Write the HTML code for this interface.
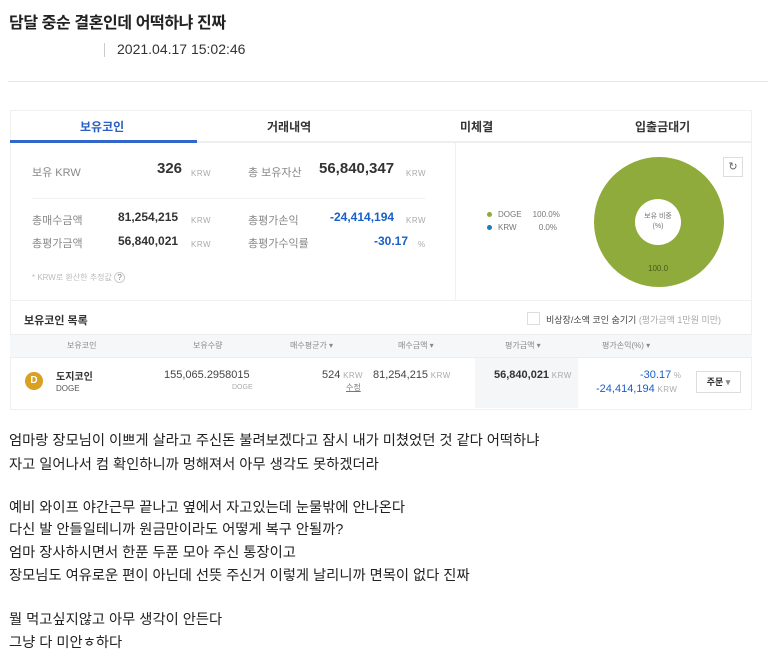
<!DOCTYPE html><html><head><meta charset="utf-8"><style>
*{margin:0;padding:0;box-sizing:border-box}
body{width:768px;height:661px;background:#fff;font-family:"Liberation Sans","Noto Sans CJK KR",sans-serif;color:#222;position:relative;overflow:hidden}
.a{position:absolute;white-space:nowrap}
.g{color:#888}.k{font-size:8px;color:#aaa;letter-spacing:.5px}
.b{color:#1a5fc9}
.n{font-weight:bold;color:#333}
.t{font-size:14.3px;color:#222;left:9px}
</style></head><body>
<div class="a" style="left:9px;top:9px;font-size:16px;letter-spacing:-0.4px;font-weight:bold;color:#222">담달 중순 결혼인데 어떡하냐 진짜</div>
<div class="a" style="left:104px;top:43px;width:1px;height:14px;background:#ccc"></div>
<div class="a" style="left:117px;top:41px;font-size:14px;color:#333">2021.04.17 15:02:46</div>
<div class="a" style="left:8px;top:81px;width:760px;height:1px;background:#e8e8e8"></div>

<div class="a" style="left:10px;top:110px;width:742px;height:300px;border:1px solid #f0f0f0;background:#fff"></div>
<div class="a" style="left:10px;top:141px;width:742px;height:2px;background:#eceef2"></div>
<div class="a" style="left:10px;top:140px;width:187px;height:3px;background:#3266c8"></div>
<div class="a" style="left:80px;top:118px;font-size:12px;font-weight:bold;color:#2b5fc4">보유코인</div>
<div class="a" style="left:267px;top:118px;font-size:12px;font-weight:bold;color:#333">거래내역</div>
<div class="a" style="left:460px;top:118px;font-size:12px;font-weight:bold;color:#333">미체결</div>
<div class="a" style="left:635px;top:118px;font-size:12px;font-weight:bold;color:#333">입출금대기</div>
<div class="a" style="left:455px;top:143px;width:1px;height:157px;background:#f0f0f0"></div>

<div class="a g" style="left:32px;top:164px;font-size:11px">보유 KRW</div>
<div class="a n" style="left:157px;top:160px;font-size:15px">326</div><div class="a k" style="left:191px;top:169px">KRW</div>
<div class="a g" style="left:248px;top:164px;font-size:11px">총 보유자산</div>
<div class="a n" style="left:319px;top:160px;font-size:15px">56,840,347</div><div class="a k" style="left:406px;top:169px">KRW</div>
<div class="a" style="left:32px;top:198px;width:393px;height:1px;background:#f0f0f0"></div>
<div class="a g" style="left:32px;top:212px;font-size:11px">총매수금액</div>
<div class="a n" style="left:118px;top:210px;font-size:12px">81,254,215</div><div class="a k" style="left:191px;top:216px">KRW</div>
<div class="a g" style="left:248px;top:212px;font-size:11px">총평가손익</div>
<div class="a n b" style="left:330px;top:210px;font-size:12px;color:#1a5fc9">-24,414,194</div><div class="a k" style="left:406px;top:216px">KRW</div>
<div class="a g" style="left:32px;top:235px;font-size:11px">총평가금액</div>
<div class="a n" style="left:118px;top:234px;font-size:12px">56,840,021</div><div class="a k" style="left:191px;top:240px">KRW</div>
<div class="a g" style="left:248px;top:235px;font-size:11px">총평가수익률</div>
<div class="a n" style="left:374px;top:234px;font-size:12px;color:#1a5fc9">-30.17</div><div class="a k" style="left:418px;top:240px">%</div>
<div class="a" style="left:32px;top:272px;font-size:8px;color:#bbb">* KRW로 환산한 추정값 <span style="display:inline-block;width:11px;height:11px;border:1px solid #ccc;border-radius:50%;text-align:center;line-height:9px;color:#777">?</span></div>

<div class="a" style="left:487px;top:210px;font-size:8px;color:#777"><span style="display:inline-block;width:5px;height:5px;border-radius:50%;background:#8cab3a;margin-right:6px"></span>DOGE &nbsp;&nbsp;&nbsp;&nbsp;100.0%</div>
<div class="a" style="left:487px;top:223px;font-size:8px;color:#777"><span style="display:inline-block;width:5px;height:5px;border-radius:50%;background:#1c7cbc;margin-right:6px"></span>KRW &nbsp;&nbsp;&nbsp;&nbsp;&nbsp;&nbsp;&nbsp;&nbsp;&nbsp;0.0%</div>
<div class="a" style="left:594px;top:157px;width:130px;height:130px;border-radius:50%;background:#8eab3b"></div>
<div class="a" style="left:635px;top:199px;width:46px;height:46px;border-radius:50%;background:#fff;font-size:7px;color:#777;text-align:center;padding-top:13px;line-height:10px">보유 비중<br>(%)</div>
<div class="a" style="left:648px;top:264px;font-size:8px;color:#4a5a1a">100.0</div>
<div class="a" style="left:723px;top:157px;width:20px;height:20px;border:1px solid #ddd;background:#fff;text-align:center;font-size:11px;line-height:18px;color:#666">↻</div>

<div class="a" style="left:10px;top:300px;width:742px;height:1px;background:#f0f0f0"></div>
<div class="a" style="left:24px;top:312px;font-size:11px;font-weight:bold;color:#333">보유코인 목록</div>
<div class="a" style="left:527px;top:312px;width:13px;height:13px;border:1px solid #ddd"></div>
<div class="a" style="left:546px;top:313px;font-size:9px;color:#444">비상장/소액 코인 숨기기 <span style="color:#aaa">(평가금액 1만원 미만)</span></div>
<div class="a" style="left:10px;top:334px;width:742px;height:24px;background:#f6f7f9;border-top:1px solid #eee;border-bottom:1px solid #eee"></div>
<div class="a g" style="left:67px;top:340px;font-size:8px">보유코인</div>
<div class="a g" style="left:193px;top:340px;font-size:8px">보유수량</div>
<div class="a g" style="left:290px;top:340px;font-size:8px">매수평균가 ▾</div>
<div class="a g" style="left:398px;top:340px;font-size:8px">매수금액 ▾</div>
<div class="a g" style="left:505px;top:340px;font-size:8px">평가금액 ▾</div>
<div class="a g" style="left:602px;top:340px;font-size:8px">평가손익(%) ▾</div>
<div class="a" style="left:475px;top:358px;width:103px;height:50px;background:#f5f6f8"></div>
<div class="a" style="left:25px;top:372px;width:18px;height:18px;border-radius:50%;background:#d9a021;color:#fff;font-size:10px;font-weight:bold;text-align:center;line-height:18px">D</div>
<div class="a" style="left:56px;top:368px;font-size:10px;font-weight:bold;color:#333">도지코인</div>
<div class="a" style="left:56px;top:384px;font-size:8px;color:#555">DOGE</div>
<div class="a" style="left:164px;top:369px;font-size:11px;color:#444">155,065.2958015</div>
<div class="a" style="left:232px;top:384px;font-size:7px;color:#aaa">DOGE</div>
<div class="a" style="left:322px;top:369px;font-size:11px;color:#444">524<span class="k"> KRW</span></div>
<div class="a" style="left:346px;top:382px;font-size:8px;color:#777;text-decoration:underline">수정</div>
<div class="a" style="left:373px;top:369px;font-size:11px;color:#444">81,254,215<span class="k"> KRW</span></div>
<div class="a" style="left:494px;top:369px;font-size:11px;font-weight:bold;color:#333">56,840,021<span class="k" style="font-weight:normal"> KRW</span></div>
<div class="a" style="left:640px;top:369px;font-size:11px;color:#1a5fc9">-30.17<span class="k"> %</span></div>
<div class="a" style="left:596px;top:383px;font-size:11px;color:#1a5fc9">-24,414,194<span class="k"> KRW</span></div>
<div class="a" style="left:696px;top:371px;width:45px;height:22px;border:1px solid #ddd;font-size:9px;font-weight:bold;color:#333;text-align:center;line-height:20px">주문 <span style="color:#888">▾</span></div>

<div class="a t" style="top:429px">엄마랑 장모님이 이쁘게 살라고 주신돈 불려보겠다고 잠시 내가 미쳤었던 것 같다 어떡하냐</div>
<div class="a t" style="top:453px">자고 일어나서 컴 확인하니까 멍해져서 아무 생각도 못하겠더라</div>
<div class="a t" style="top:496px">예비 와이프 야간근무 끝나고 옆에서 자고있는데 눈물밖에 안나온다</div>
<div class="a t" style="top:518px">다신 발 안들일테니까 원금만이라도 어떻게 복구 안될까?</div>
<div class="a t" style="top:541px">엄마 장사하시면서 한푼 두푼 모아 주신 통장이고</div>
<div class="a t" style="top:564px">장모님도 여유로운 편이 아닌데 선뜻 주신거 이렇게 날리니까 면목이 없다 진짜</div>
<div class="a t" style="top:608px">뭘 먹고싶지않고 아무 생각이 안든다</div>
<div class="a t" style="top:631px">그냥 다 미안ㅎ하다</div>
</body></html>
